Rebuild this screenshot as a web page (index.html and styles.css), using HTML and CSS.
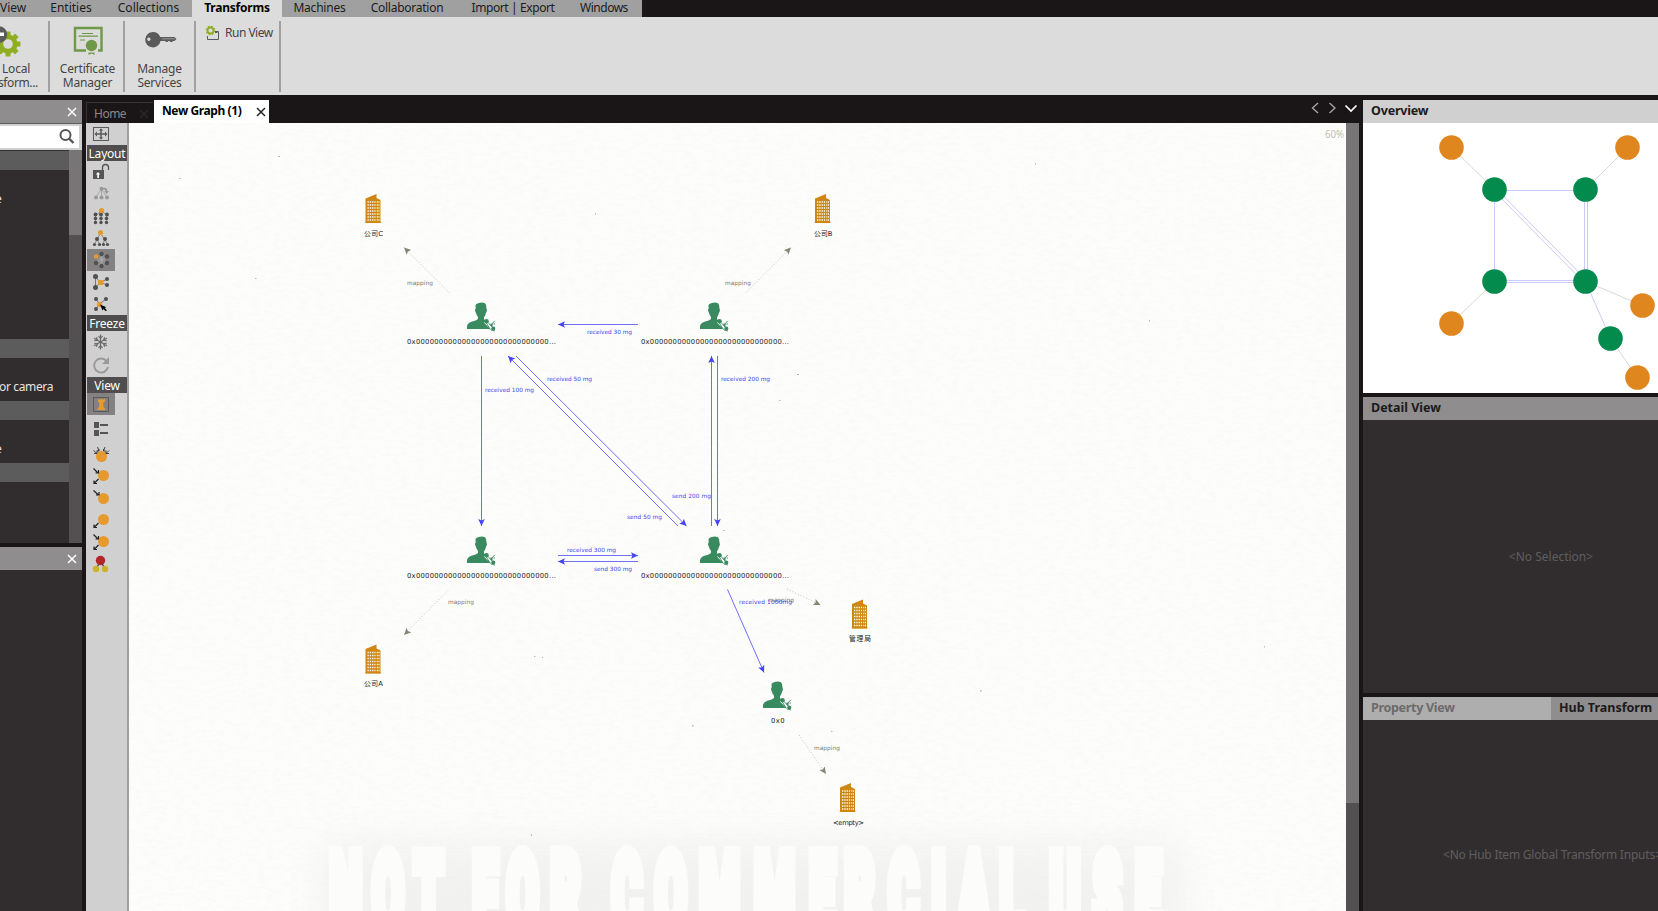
FILE: index.html
```html
<!DOCTYPE html>
<html lang="en">
<head>
<meta charset="utf-8">
<title>New Graph (1)</title>
<link rel="stylesheet" href="styles.css">
</head>
<body>
<div class="app">
  <nav class="menu">
    <span class="menu-item m-view">View</span>
    <span class="menu-item m-ent">Entities</span>
    <span class="menu-item m-col">Collections</span>
    <span class="menu-item m-tra active">Transforms</span>
    <span class="menu-item m-mac">Machines</span>
    <span class="menu-item m-lab">Collaboration</span>
    <span class="menu-item m-imp">Import | Export</span>
    <span class="menu-item m-win">Windows</span>
  </nav>
  <div class="ribbon">
    <div class="tool t-local">
      <svg width="48" height="42" viewBox="0 17 48 42">
        <g fill="#8fae22"><circle cx="8" cy="44" r="9.6"/>
          <g id="teeth"><rect x="5.5" y="31.5" width="5" height="25"/><rect x="5.5" y="31.5" width="5" height="25" transform="rotate(45 8 44)"/><rect x="5.5" y="31.5" width="5" height="25" transform="rotate(90 8 44)"/><rect x="5.5" y="31.5" width="5" height="25" transform="rotate(135 8 44)"/></g></g>
        <circle cx="8" cy="44" r="4.8" fill="#dcdcdc"/>
        <circle cx="-1" cy="34.500" r="8.300" fill="#5c5c5c"/><rect x="-6" y="32.500" width="10" height="3.500" fill="#fff"/>
      </svg>
      <span class="l1">Local</span><span class="l2">sform...</span>
    </div>
    <div class="tool t-cert">
      <svg width="73" height="42" viewBox="50 17 73 42">
        <path d="M86 50.500H75V28H101.500V50.500H98" fill="none" stroke="#6e9947" stroke-width="2.400"/>
        <path d="M82 33.500H93M78.500 36.200H98M80 40H85" stroke="#6e9947" stroke-width="1.200"/>
        <circle cx="91.500" cy="45.500" r="5.700" fill="#6e9947"/><path d="M88.500 52.500H94.500V55L91.500 53.600L88.500 55Z" fill="#6e9947"/>
      </svg>
      <span>Certificate</span><span>Manager</span>
    </div>
    <div class="tool t-serv">
      <svg width="69" height="42" viewBox="125 17 69 42">
        <path fill="#5a5a5a" fill-rule="evenodd" d="M153 32a7.700 7.700 0 0 1 7.200 5H174.500L176.500 39L174.500 41H173L172 42H170.500L169.500 41H168.500L167.500 42H166L165 41H160.500A7.700 7.700 0 1 1 153 32ZM148.800 37.500a1.700 1.700 0 1 0 .1 0Z"/><path d="M162 38.800H175" stroke="#aaa" stroke-width=".8"/>
      </svg>
      <span>Manage</span><span>Services</span>
    </div>
    <div class="tool t-run">
      <svg width="16" height="16" viewBox="205 25 16 16">
        <g stroke="#8fae22" fill="none"><circle cx="210.500" cy="30.500" r="3" stroke-width="1.800"/><circle cx="210.500" cy="30.500" r="4.200" stroke-width="1.200" stroke-dasharray="1.700 1.600"/></g>
        <path d="M215.500 31.500H218.500V39.500H207.500V36" fill="none" stroke="#5a5a5a"/><rect x="215" y="31" width="2.500" height="2" fill="#5a5a5a"/>
      </svg>
      <span>Run View</span>
    </div>
  </div>

  <main class="work">
    <aside class="left">
      <header class="bar left-bar"><svg class="x" width="10" height="10" viewBox="0 0 10 10"><path d="M1 1L9 9M9 1L1 9"/></svg></header>
      <div class="search"><div class="field"><svg width="16" height="16" viewBox="0 0 16 16"><circle cx="6.500" cy="6" r="5" fill="none" stroke="#555" stroke-width="2"/><path d="M10 9.500L14.500 14" stroke="#555" stroke-width="2.400"/></svg></div></div>
      <div class="list">
        <div class="sections">
          <div class="sec-h"></div><div class="sec-b s1"><span>e</span></div>
          <div class="sec-h"></div><div class="sec-b s2"><span>or camera</span></div>
          <div class="sec-h"></div><div class="sec-b s3"><span>e</span></div>
          <div class="sec-h"></div><div class="sec-b s4"></div>
        </div>
        <div class="scroll"><div class="thumb"></div></div>
      </div>
      <header class="bar left-bar second"><svg class="x" width="10" height="10" viewBox="0 0 10 10"><path d="M1 1L9 9M9 1L1 9"/></svg></header>
      <div class="left-body"></div>
    </aside>

    <section class="center">
      <div class="tabs">
        <div class="tab home"><span>Home</span><svg class="x" width="10" height="10" viewBox="0 0 10 10"><path d="M1 1L9 9M9 1L1 9"/></svg></div>
        <div class="tab graph"><span>New Graph (1)</span><svg class="x" width="10" height="10" viewBox="0 0 10 10"><path d="M1 1L9 9M9 1L1 9"/></svg></div>
        <svg class="nav" width="48" height="16" viewBox="1311 100 48 16"><path d="M1318 103L1312.500 108L1318 113M1329.500 103L1335 108L1329.500 113" fill="none" stroke="#aaa" stroke-width="1.300"/><path d="M1345.500 105.500L1351 111L1356.500 105.500" fill="none" stroke="#fff" stroke-width="1.700"/></svg>
      </div>
      <div class="stage">
        <div class="toolbar">
          <svg width="28" height="22" viewBox="87 123 28 22"><rect x="93.500" y="127.500" width="15" height="13" fill="none" stroke="#5a5a5a"/><path d="M96 134H106M101 129V139" stroke="#5a5a5a" stroke-width="1.500"/><path d="M94.500 134l2.500-2.500v5zM107.500 134l-2.500-2.500v5zM101 128.500l-2.300 2h4.600zM101 139.500l-2.300-2h4.600z" fill="#5a5a5a"/></svg>
          <div class="group">Layout</div>
          <svg width="28" height="22" viewBox="87 161 28 22"><rect x="93" y="170" width="11" height="9" fill="#555"/><path d="M102.500 170V167.500a3 3 0 0 1 6 0V170" fill="none" stroke="#555" stroke-width="1.300"/><path d="M98 172l-2.200 2.500H97.300V178H98.900V174.500H100.200Z" fill="#fff"/></svg>
          <svg width="28" height="22" viewBox="87 183 28 22"><path d="M101.500 189L96 197M101.500 189V197M101.500 189L107 197" stroke="#aaa"/><g fill="#999"><circle cx="101.500" cy="188.700" r="2"/><circle cx="96" cy="197.500" r="2"/><circle cx="101.500" cy="197.500" r="2"/><circle cx="107" cy="197.500" r="2"/><path d="M103 188q4-1 4.500 3h1.500l-2.200 3-2.600-3h1.500q-.5-2-2.700-1.500z"/></g></svg>
          <svg width="28" height="22" viewBox="87 205 28 22"><path d="M101.500 211L95 216M101.500 211L108 216M95.500 214V222M101 212V222M106.500 214V222" stroke="#888"/><g fill="#505050"><circle cx="95.500" cy="214.500" r="1.900"/><circle cx="101" cy="214.500" r="1.900"/><circle cx="107" cy="214.500" r="1.900"/><circle cx="95.500" cy="218.500" r="1.800"/><circle cx="101" cy="218.500" r="1.800"/><circle cx="106.500" cy="218.500" r="1.800"/><circle cx="95.500" cy="222.500" r="1.700"/><circle cx="101" cy="222.500" r="1.700"/><circle cx="106.500" cy="222.500" r="1.700"/></g><circle cx="101.500" cy="210.500" r="2.600" fill="#e69a2d"/></svg>
          <svg width="28" height="22" viewBox="87 227 28 22"><path d="M100.500 233L94.500 244M100.500 233L107.500 244M97 239L99.500 244M105 239L103 244" stroke="#888"/><g fill="#505050"><circle cx="97" cy="239" r="2"/><circle cx="105" cy="239" r="2"/><circle cx="94.500" cy="244.500" r="1.600"/><circle cx="99.500" cy="244.500" r="1.600"/><circle cx="103.500" cy="244.500" r="1.600"/><circle cx="107.500" cy="244.500" r="1.600"/></g><circle cx="100.500" cy="232.500" r="2.600" fill="#e69a2d"/></svg>
          <svg class="on" width="28" height="22" viewBox="87 249 28 22"><path d="M101.500 254V266M96 256.500L107 263M96 263L107 256.500M99 254.500L104 265.500M97 260H106M104 254.500L99 265.500" stroke="#aaa" stroke-width=".8"/><g fill="#505050"><circle cx="101.500" cy="254" r="2.200"/><circle cx="107" cy="256.500" r="2.200"/><circle cx="107" cy="263" r="2.200"/><circle cx="101.500" cy="266" r="2.200"/><circle cx="96" cy="263" r="2.200"/></g><circle cx="96" cy="256.500" r="2.200" fill="#e69a2d"/></svg>
          <svg width="28" height="22" viewBox="87 271 28 22"><path d="M95.500 276.500V287L100.500 282.500L95.500 277M100.500 282.500L107 279M100.500 282.500L107 285" stroke="#777" fill="none"/><g fill="#505050"><circle cx="95.500" cy="276.500" r="2.500"/><circle cx="95.500" cy="287.500" r="2.500"/><circle cx="107" cy="279" r="2"/><circle cx="107" cy="285" r="2"/></g><rect x="98" y="280" width="5" height="5" rx="1" fill="#e69a2d"/></svg>
          <svg width="28" height="22" viewBox="87 293 28 22"><path d="M96 299L99.500 304L106 299M99.500 304L96 309" stroke="#777" fill="none"/><g fill="#505050"><circle cx="96" cy="299" r="2"/><circle cx="106" cy="299" r="2"/><circle cx="96" cy="309" r="2"/></g><circle cx="99.500" cy="304.500" r="2.600" fill="#e69a2d"/><path d="M100 304.500L106 307L105 308.200L107 310.500L105.500 311L103.500 309L102.500 310.500Z" fill="#000"/></svg>
          <div class="group">Freeze</div>
          <svg width="28" height="22" viewBox="87 331 28 22"><g stroke="#6a6a6a" stroke-width="1.200" fill="none"><path id="arm" d="M100.500 334.500V349.500M98.500 336L100.500 338.500L102.500 336M98.500 348L100.500 345.500L102.500 348"/><use href="#arm" transform="rotate(60 100.500 342)"/><use href="#arm" transform="rotate(120 100.500 342)"/></g></svg>
          <svg width="28" height="24" viewBox="87 353 28 24"><path d="M106.500 361A7 7 0 1 0 108 367" fill="none" stroke="#999" stroke-width="1.900"/><path d="M109 357V364H102Z" fill="#999"/></svg>
          <div class="group">View</div>
          <svg class="on" width="28" height="22" viewBox="87 393 28 22"><rect x="93.500" y="397.500" width="15" height="14" fill="none" stroke="#5a5a5a"/><path d="M98 399h1.500v1h1v-1h2v1h1v-1H105v2.500L103 403l.7 4.500 1.300 1v1.500H97.500v-1.500l1.300-1 .7-4.500-1.500-1.500z" fill="#e69a2d"/></svg>
          <svg width="28" height="28" viewBox="87 415 28 28"><path d="M94 422h5v6h-5zM94 430h5v6h-5zM100 424h8v2h-8zM100 432h8v2h-8z" fill="#555"/></svg>
          <svg width="28" height="22" viewBox="87 443 28 22"><circle cx="101.500" cy="456.500" r="5.500" fill="#e69a2d"/><path d="M93.500 450.500L97 453.500M97.500 447L99 451M105 447L103.500 451M109 450.500L106 453.500M94 453.500h3v-3M97 451h2v-2M103.500 449v2h2M106 450.500v3h3" stroke="#333" stroke-width=".9" fill="none"/></svg>
          <svg width="28" height="22" viewBox="87 465 28 22"><circle cx="103.500" cy="475.500" r="5.500" fill="#e69a2d"/><path d="M93.500 468.500L98 473M95.500 473H98.500V470M98.500 479L94 483.500M94 480.500V483.500H97" stroke="#222" stroke-width="1.200" fill="none"/></svg>
          <svg width="28" height="22" viewBox="87 487 28 22"><circle cx="103.500" cy="498.500" r="5.500" fill="#e69a2d"/><path d="M93.500 490.500L98.500 495M96 495H99V492" stroke="#222" stroke-width="1.200" fill="none"/></svg>
          <svg width="28" height="22" viewBox="87 509 28 22"><circle cx="103.500" cy="519.500" r="5.500" fill="#e69a2d"/><path d="M98.500 523L94 527.500M94 524.500V527.500H97" stroke="#222" stroke-width="1.200" fill="none"/></svg>
          <svg width="28" height="22" viewBox="87 531 28 22"><circle cx="103.500" cy="541.500" r="5.500" fill="#e69a2d"/><path d="M93.500 534.500L98 539M95.500 539H98.500V536M98.500 545L94 549.500M94 546.500V549.500H97" stroke="#222" stroke-width="1.200" fill="none"/></svg>
          <svg width="28" height="22" viewBox="87 553 28 22"><path d="M100.500 561L96.500 568M100.500 561L104.500 568" stroke="#444" stroke-width="1.400"/><circle cx="100.500" cy="560.500" r="4.700" fill="#b22529"/><circle cx="96" cy="569" r="3.200" fill="#cfb02c"/><circle cx="105" cy="569" r="3.200" fill="#cfb02c"/></svg>
        </div>
        <svg class="canvas" width="1217" height="788" viewBox="129 123 1217 788">
          <defs>
            <filter id="paper" x="0" y="0" width="100%" height="100%"><feTurbulence type="fractalNoise" baseFrequency=".12 .3" numOctaves="4" seed="8"/><feColorMatrix values="0 0 0 0 .55  0 0 0 0 .53  0 0 0 0 .5  .11 0 0 0 -.04"/></filter>
            <filter id="soft" x="-10%" y="-60%" width="120%" height="220%"><feGaussianBlur stdDeviation="20"/></filter>
            <marker id="ab" markerUnits="userSpaceOnUse" markerWidth="8" markerHeight="8" refX="7" refY="3.300" orient="auto"><path d="M0 0L7 3.300L0 6.600L1.500 3.300Z" fill="#4444f4"/></marker>
            <marker id="ag" markerUnits="userSpaceOnUse" markerWidth="8" markerHeight="8" refX="7" refY="3.300" orient="auto"><path d="M0 0L7 3.300L0 6.600L1.500 3.300Z" fill="#858575"/></marker>
            <g id="bld"><path d="M0 4.500L11 0V4L15 6V29H0Z" fill="#cf8713"/><path d="M2 8H10M2 11H10M2 14H10M2 17H10M2 20H10M2 23H10M2 26H10" stroke="#fff" stroke-width="1.300" stroke-dasharray="1.300 1"/><path d="M11.300 8H14M11.300 11H14M11.300 14H14M11.300 17H14M11.300 20H14M11.300 23H14M11.300 26H14" stroke="#fff" stroke-width="1.300" stroke-dasharray="1 .7"/><path d="M-.3 28.300H15.600" stroke="#cf8713" stroke-width="1"/></g>
            <g id="per"><path d="M8.500 2.500Q10 .3 15.500 0L18 .8Q19.800 2.500 19.500 6L20 8L18.800 11Q18.300 13.500 17 14.500V17L19 18L24 21.500V26.600H0V23.500Q.5 20.500 4.500 19.200Q9.500 18 11 16.500V14.300Q9.400 12.800 9 10.500L8 8Q8 6.500 8.700 6Z" fill="#3a8a60"/><path d="M18.500 18.500L27.500 27.500" stroke="#fdfdfc" stroke-width="4.500"/><g fill="#3a8a60" stroke="none"><circle cx="19.500" cy="18.800" r="2.300"/><circle cx="26.300" cy="26" r="2"/><circle cx="24.500" cy="22.300" r="1.200"/></g><path d="M19 20L23.500 27.200M21 20L26 25.500M24.500 22L27.800 18.300M24.500 22.500L25.500 25M26.500 21.500H28M24 27.500L28 28.500" stroke="#3a8a60" stroke-width=".9"/></g>
          </defs>
          <rect x="129" y="123" width="1217" height="788" fill="#fdfdfc"/>
          <rect x="129" y="123" width="1217" height="788" filter="url(#paper)"/>
          <g fill="#999" opacity=".7"><rect x="179" y="178" width="1.500" height="1"/><rect x="278" y="156" width="2" height="1"/><rect x="255" y="278" width="1.500" height="1"/><rect x="595" y="213" width="1" height="1.500"/><rect x="723" y="530" width="1.500" height="1"/><rect x="797" y="374" width="2" height="1"/><rect x="534" y="656" width="1.500" height="1"/><rect x="542" y="657" width="1" height="1"/><rect x="692" y="725" width="1.500" height="1.500"/><rect x="980" y="690" width="1.500" height="1.500"/><rect x="831" y="731" width="1.500" height="1"/><rect x="779" y="400" width="1.500" height="1"/><rect x="1035" y="163" width="1" height="1.500"/><rect x="1149" y="320" width="1" height="1.500"/><rect x="1264" y="646" width="1" height="1.500"/><rect x="531" y="834" width="1" height="2"/></g>
          <rect x="322" y="842" width="860" height="140" fill="#eeeeed" opacity=".72" filter="url(#soft)"/>
          <g transform="translate(329 932) scale(.42 1)"><text class="wm" x="2 103 203 342 423 528 673 776 882 1013 1144 1228 1332 1435 1498 1597 1716 1819 1920" y="0">NOTFORCOMMERCIALUSE</text></g>

          <g class="blue">
            <path d="M638 324.500H558" marker-end="url(#ab)"/>
            <path d="M481.500 356V526" marker-end="url(#ab)"/>
            <path d="M516 356L686.500 526" marker-end="url(#ab)"/>
            <path d="M678 526L508 356" marker-end="url(#ab)"/>
            <path d="M711.500 526V356" marker-end="url(#ab)"/>
            <path d="M717.500 356V526" marker-end="url(#ab)"/>
            <path d="M558 555.500H638" marker-end="url(#ab)"/>
            <path d="M638 561.500H558" marker-end="url(#ab)"/>
            <path d="M727.500 589.500L764 672.500" marker-end="url(#ab)"/>
          </g>
          <g class="map">
            <path d="M449 292.500L404 247.500" marker-end="url(#ag)"/>
            <path d="M746 292.500L791 247.500" marker-end="url(#ag)"/>
            <path d="M448 590.500L404 635" marker-end="url(#ag)"/>
            <path d="M787 589L820.500 605" marker-end="url(#ag)"/>
            <path d="M799 735L826 774" marker-end="url(#ag)"/>
          </g>
          <g class="map-t">
            <text x="407" y="285" textLength="26">mapping</text><text x="725" y="285" textLength="26">mapping</text><text x="448" y="604" textLength="26">mapping</text><text x="768" y="601.500" textLength="26">mapping</text><text x="814" y="750" textLength="26">mapping</text>
          </g>
          <g class="blue-t">
            <text x="587" y="334" textLength="45">received 30 mg</text>
            <text x="485" y="392" textLength="49">received 100 mg</text>
            <text x="547" y="381" textLength="45">received 50 mg</text>
            <text x="721" y="381" textLength="49">received 200 mg</text>
            <text x="672" y="498" textLength="39">send 200 mg</text>
            <text x="627" y="519" textLength="35">send 50 mg</text>
            <text x="567" y="552" textLength="49">received 300 mg</text>
            <text x="594" y="571" textLength="38">send 300 mg</text>
            <text x="739" y="604" textLength="53">received 1000mg</text>
          </g>
          <use href="#bld" x="365.500" y="194"/><use href="#bld" x="815" y="194"/><use href="#bld" x="365.500" y="644.500"/><use href="#bld" x="852" y="599.500"/><use href="#bld" x="840" y="783"/>
          <use href="#per" x="467" y="302.500"/><use href="#per" x="700" y="302.500"/><use href="#per" x="467" y="536.500"/><use href="#per" x="700" y="536.500"/><use href="#per" x="763" y="681.500"/>
          <g class="name">
            <text x="364" y="236" textLength="19">公司C</text><text x="814" y="236" textLength="18.500">公司B</text><text x="364" y="686" textLength="19">公司A</text><text x="849" y="641" textLength="22">管理局</text>
            <text x="833" y="825" textLength="31">&lt;empty&gt;</text><text x="771" y="723" textLength="13.500">0x0</text>
            <text x="407" y="344" textLength="149">0x00000000000000000000000000000...</text><text x="641" y="344" textLength="148">0x00000000000000000000000000000...</text>
            <text x="407" y="578" textLength="149">0x00000000000000000000000000000...</text><text x="641" y="578" textLength="148">0x00000000000000000000000000000...</text>
          </g>
          <text class="zoom" x="1325" y="138" textLength="19" lengthAdjust="spacingAndGlyphs">60%</text>
        </svg>
        <div class="scroll main-scroll"><div class="thumb"></div></div>
      </div>
    </section>

    <aside class="right">
      <header class="bar light"><span class="w-over">Overview</span></header>
      <svg class="overview" width="295" height="270" viewBox="1363 123 295 270">
        <g fill="none" stroke="#d8d8d4"><path d="M1451.500 147.500L1494.500 189.500M1627.500 147.500L1585.500 189.500M1451.500 323.500L1494.500 281.500M1642.500 305.500L1585.500 281.500M1610.500 338.500L1637.500 377.500"/></g>
        <g fill="none" stroke="#c9c9fb"><path d="M1494.500 190.500H1585.500M1494.500 189.500V281.500M1584.500 189V281M1587.500 189V281M1494.500 280.500H1585.500M1494.500 282.500H1585.500M1496 188.500L1587 280.500M1493.500 190.500L1584 282.500M1585.500 281.500L1610.500 338.500"/></g>
        <g fill="#e0861e"><circle cx="1451.500" cy="147.500" r="12.300"/><circle cx="1627.500" cy="147.500" r="12.300"/><circle cx="1642.500" cy="305.500" r="12.300"/><circle cx="1451.500" cy="323.500" r="12.300"/><circle cx="1637.500" cy="377.500" r="12.300"/></g>
        <g fill="#028b4c"><circle cx="1494.500" cy="189.500" r="12.300"/><circle cx="1585.500" cy="189.500" r="12.300"/><circle cx="1494.500" cy="281.500" r="12.300"/><circle cx="1585.500" cy="281.500" r="12.300"/><circle cx="1610.500" cy="338.500" r="12.300"/></g>
      </svg>
      <header class="bar gap"><span class="w-detail">Detail View</span></header>
      <div class="pane detail"><span>&lt;No Selection&gt;</span></div>
      <header class="bar gap"><span class="prop">Property View</span><span class="w-hub">Hub Transform</span></header>
      <div class="pane hub"><span>&lt;No Hub Item Global Transform Inputs&gt;</span></div>
    </aside>
  </main>
</div>
</body>
</html>
```

FILE: styles.css
```css
* { box-sizing: border-box; }
body { margin: 0; background: #1a1617; font: 12px/14px "Noto Sans", "Open Sans", sans-serif; color: #1c1c1c; }
svg { display: block; flex: none; }
.app { width: 1658px; height: 911px; overflow: hidden; display: flex; flex-direction: column; }

.menu { display: flex; height: 17px; width: 642px; background: #a0a0a0; flex: none; }
.menu-item { white-space: nowrap; line-height: 15px; height: 17px; flex: none; text-align: center; }
.m-view { width: 37px; padding-right: 11px; }
.m-ent { width: 68px; }
.m-col { width: 87px; }
.m-tra { width: 90px; letter-spacing: -.2px; }
.m-mac { width: 75px; letter-spacing: -.2px; }
.m-lab { width: 100px; letter-spacing: -.25px; }
.m-imp { width: 112px; letter-spacing: -.4px; }
.m-win { width: 73px; padding-right: 3px; letter-spacing: -.5px; }
.active { background: #dcdcdc; font-weight: bold; color: #000; }

.ribbon { display: flex; height: 78px; background: #dcdcdc; color: #444; flex: none; padding: 4px 0 3px; }
.tool { display: flex; flex-direction: column; align-items: center; border-right: 2px solid #a0a0a0; height: 71px; flex: none; white-space: nowrap; letter-spacing: -.2px; }
.tool svg { margin: -4px 0 3px; flex: none; }
.t-local { width: 50px; align-items: flex-start; }
.t-local .l1 { padding-left: 2px; }
.t-local .l2 { margin-left: -2px; letter-spacing: -.4px; }
.t-cert { width: 75px; padding-left: 2px; }
.t-cert svg { margin-left: -2px; }
.t-serv { width: 71px; }
.t-run { width: 85px; flex-direction: row; align-items: flex-start; padding: 4px 0 0 9px; gap: 4px; letter-spacing: -.5px; }
.t-run svg { margin: 0; }
.t-run span { padding-top: 1px; }

.work { display: flex; flex: 1; padding-top: 5px; min-height: 0; }
.bar { height: 23px; background: #8f8d8e; display: flex; align-items: center; flex: none; font-weight: bold; font-size: 12.500px; line-height: 16px; color: #1c1a1b; }
.bar span { margin-top: -2px; }
.x { fill: none; stroke: #fff; stroke-width: 1.500; }

.left { width: 82px; display: flex; flex-direction: column; margin-right: 4px; flex: none; }
.left-bar { justify-content: flex-end; padding-right: 5px; }
.search { height: 27px; background: #d0d0d0; border-top: 1px solid #5d5c5d; padding: 2px 3px 2px 0; flex: none; }
.field { height: 22px; background: #fff; display: flex; justify-content: flex-end; padding: 3px 4px 0 0; }
.list { display: flex; height: 393px; flex: none; }
.sections { width: 69px; display: flex; flex-direction: column; background: #312d2e; color: #e4e4e4; white-space: nowrap; }
.sec-h { height: 19px; background: #5d5c5d; flex: none; }
.sections .sec-h:first-child { height: 20px; border-top: 1px solid #312d2e; }
.sec-b { flex: none; }
.s1 { height: 169px; padding-top: 22px; }
.s2 { height: 43px; padding-top: 22px; letter-spacing: -.35px; }
.s3 { height: 43px; padding-top: 22px; }
.s1 span, .s3 span { margin-left: -5px; }
.s2 span { margin-left: -1px; }
.scroll { width: 13px; background: #525051; flex: none; }
.thumb { background: #777576; height: 85px; }
.second { margin-top: 4px; }
.left-body { flex: 1; background: #312d2e; }

.center { width: 1273px; display: flex; flex-direction: column; flex: none; margin-right: 4px; }
.tabs { display: flex; height: 23px; flex: none; }
.tab { display: flex; align-items: center; justify-content: space-between; white-space: nowrap; }
.home { width: 67px; margin: 2px 1px 0 0; padding: 1px 4px 0 7px; border: solid #383435; border-width: 1px 0 0 1px; color: #8a8889; height: 21px; letter-spacing: -.5px; }
.home .x { stroke: #2b2728; }
.graph { width: 115px; background: #fff; padding: 0 3px 0 8px; font-weight: bold; color: #000; letter-spacing: -.4px; }
.graph span { margin-top: -2px; }
.graph .x { stroke: #222; }
.nav { margin-left: auto; margin-right: 0; }
.stage { display: flex; flex: 1; min-height: 0; }
.toolbar { width: 43px; background: #d0d0d0; border-right: 2px solid #a0a0a0; padding-left: 1px; flex: none; display: flex; flex-direction: column; }
.toolbar .on { background: #838182; }
.group { height: 16px; line-height: 17px; background: #4f4d4e; color: #fff; text-align: center; flex: none; letter-spacing: -.2px; }
.canvas { flex: none; }
.main-scroll .thumb { height: 680px; }

.blue path { stroke: #4b4bf2; stroke-width: .8; fill: none; }
.map path { stroke: #aaaaa0; stroke-width: .7; stroke-dasharray: 1 2; fill: none; }
.canvas text { font-family: "DejaVu Sans", "Noto Sans CJK SC", sans-serif; }
.blue-t { font-size: 5.800px; fill: #3f3ff2; }
.map-t { font-size: 5.800px; fill: #7c7c6e; }
.name { font-size: 6.800px; fill: #222; }
.canvas .zoom { font-size: 10px; fill: #bdbdbb; font-family: "Noto Sans", sans-serif; }
.canvas .wm { font-family: Roboto, "Liberation Sans", sans-serif; font-weight: 900; font-size: 109px; fill: #fcfcfb; stroke: #fcfcfb; stroke-width: 16px; }

.right { width: 295px; display: flex; flex-direction: column; flex: none; white-space: nowrap; overflow: hidden; }
.right .bar { padding-left: 8px; }
.right .light { background: #d0d0d0; }
.w-over { letter-spacing: -.2px; }
.overview { background: #fff; }
.gap { margin-top: 4px; }
.pane { background: #312d2e; color: #5f5d5e; display: flex; justify-content: center; }
.detail { height: 273px; padding: 130px 0 0 81px; }
.hub { flex: 1; padding: 128px 0 0 80px; justify-content: flex-start; letter-spacing: -.22px; }
.right .bar .prop { width: 188px; height: 23px; line-height: 22px; margin: 0 8px 0 -8px; padding-left: 8px; background: #aeaeae; color: #6b6b6b; letter-spacing: -.3px; }
```
